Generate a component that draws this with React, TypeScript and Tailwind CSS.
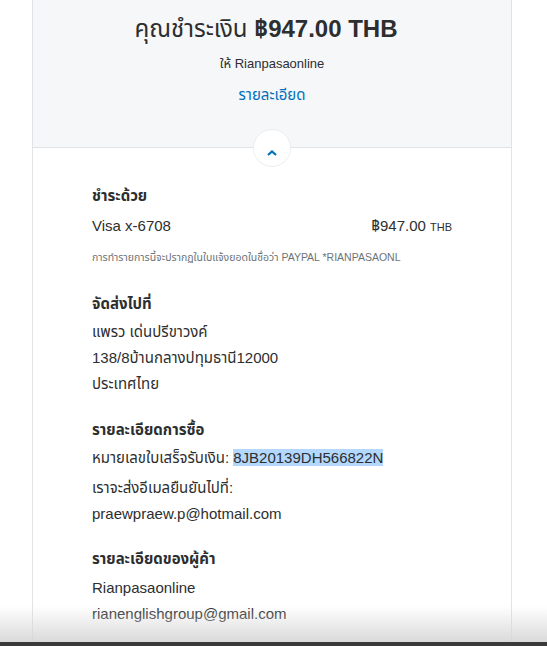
export default function App() {
  return (
    <div
      className="relative h-[646px] overflow-hidden bg-white text-[#2c2e2f]"
      style={{ fontFamily: '"Liberation Sans", "Noto Sans Thai", "Noto Sans", sans-serif' }}
    >
      <div className="ml-[32px] w-[480px] border-x border-[#e1e3e6]">
        {/* summary header */}
        <div className="relative flex h-[148px] flex-col items-center border-b border-[#e1e3e6] bg-[#f6f7f9] pt-[12px]">
          <h1 className="-ml-[12px] text-[24px] leading-[34px] text-[#2c2e2f]">
            คุณชำระเงิน <span className="font-bold">฿947.00 THB</span>
          </h1>
          <p className="mt-[10px] text-[13px] leading-[16px] text-[#2c2e2f]">ให้ Rianpasaonline</p>
          <a className="mt-[14px] text-[15px] leading-[18px] text-[#0070ba]">รายละเอียด</a>
          <div className="absolute -bottom-[20px] left-1/2 flex h-[38px] w-[38px] -translate-x-1/2 items-center justify-center rounded-full border border-[#eceef0] bg-white">
            <svg width="12" height="8" viewBox="0 0 12 8" className="mt-[10px]">
              <path d="M2 6 L6 2.5 L10 6" fill="none" stroke="#0070ba" strokeWidth="2.2" />
            </svg>
          </div>
        </div>

        {/* body */}
        <div className="px-[59px] pt-[38px] pb-[40px] text-[15px]">
          <section>
            <h2 className="text-[15px] font-bold leading-[20px]">ชำระด้วย</h2>
            <div className="mt-[10px] flex items-baseline justify-between leading-[20px]">
              <span>Visa x-6708</span>
              <span>
                ฿947.00 <span className="text-[11px]">THB</span>
              </span>
            </div>
            <p className="mt-[14px] text-[10.5px] leading-[13px] text-[#6c7378]">
              การทำรายการนี้จะปรากฏในใบแจ้งยอดในชื่อว่า PAYPAL *RIANPASAONL
            </p>
          </section>

          <section className="mt-[30px]">
            <h2 className="font-bold leading-[20px]">จัดส่งไปที่</h2>
            <div className="mt-[5px] leading-[26px]">
              <p>แพรว เด่นปรีขาวงค์</p>
              <p>138/8บ้านกลางปทุมธานี12000</p>
              <p>ประเทศไทย</p>
            </div>
          </section>

          <section className="mt-[23px]">
            <h2 className="font-bold leading-[20px]">รายละเอียดการซื้อ</h2>
            <p className="mt-[8px] leading-[20px]">
              หมายเลขใบเสร็จรับเงิน: <span className="bg-[#b3d7fd]">8JB20139DH566822N</span>
            </p>
            <p className="mt-[10px] leading-[20px]">เราจะส่งอีเมลยืนยันไปที่:</p>
            <p className="mt-[6px] leading-[20px]">praewpraew.p@hotmail.com</p>
          </section>

          <section className="mt-[25px]">
            <h2 className="font-bold leading-[20px]">รายละเอียดของผู้ค้า</h2>
            <p className="mt-[9px] leading-[20px]">Rianpasaonline</p>
            <p className="mt-[6px] leading-[20px]">rianenglishgroup@gmail.com</p>
          </section>
        </div>
      </div>

      {/* screen edge shadow */}
      <div className="pointer-events-none absolute inset-x-0 bottom-0 h-[40px] bg-gradient-to-b from-transparent to-[#d6d6d6]" />
      <div className="pointer-events-none absolute inset-x-0 bottom-0 h-[4px] bg-[#3a3a3a]" />
    </div>
  )
}
